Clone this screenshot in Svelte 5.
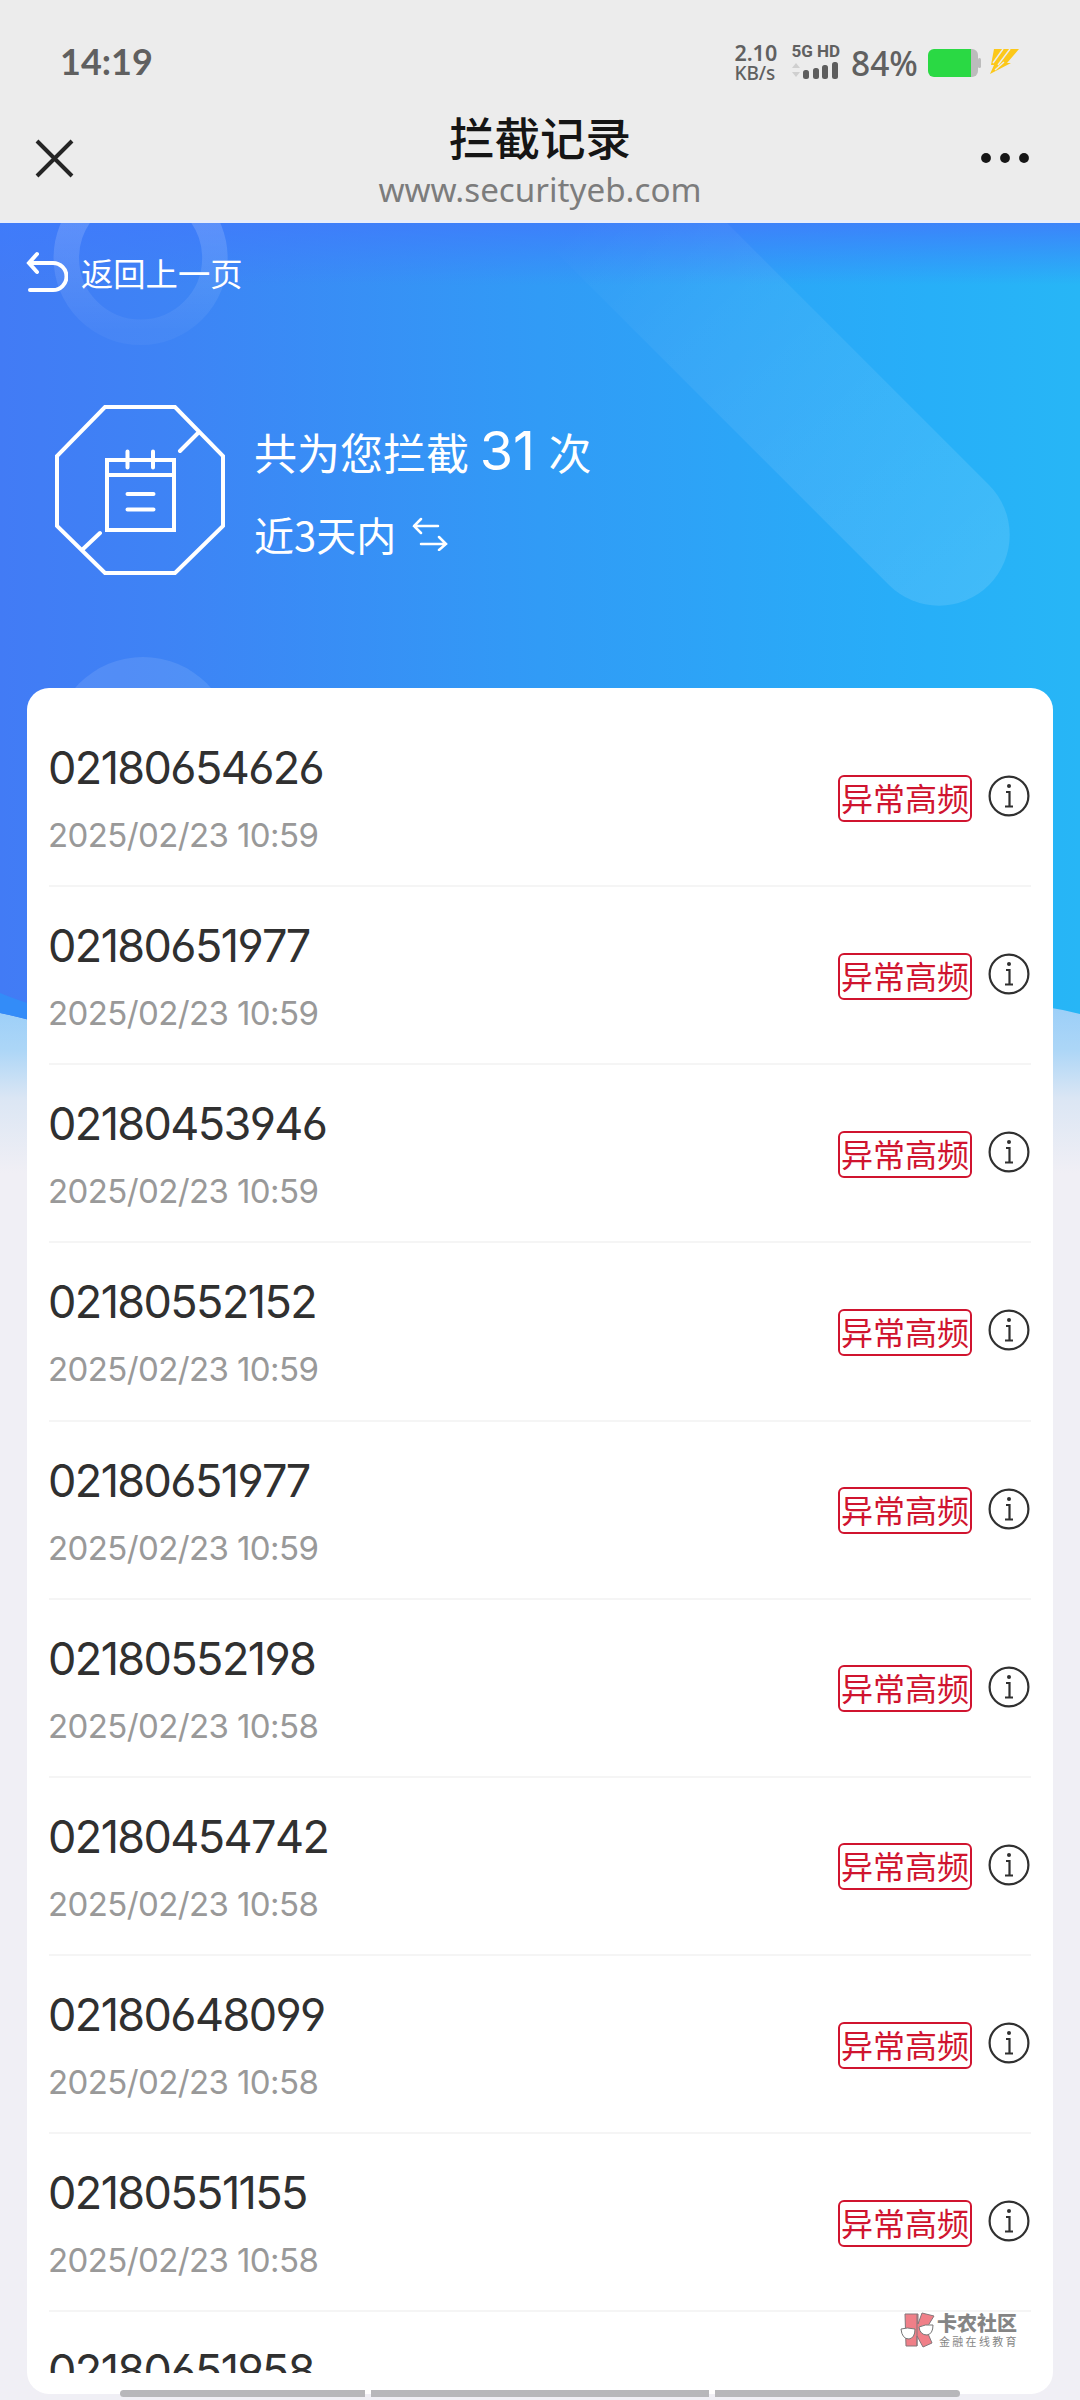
<script>
  const records = [
    { phone: "02180654626", time: "2025/02/23 10:59" },
    { phone: "02180651977", time: "2025/02/23 10:59" },
    { phone: "02180453946", time: "2025/02/23 10:59" },
    { phone: "02180552152", time: "2025/02/23 10:59" },
    { phone: "02180651977", time: "2025/02/23 10:59" },
    { phone: "02180552198", time: "2025/02/23 10:58" },
    { phone: "02180454742", time: "2025/02/23 10:58" },
    { phone: "02180648099", time: "2025/02/23 10:58" },
    { phone: "02180551155", time: "2025/02/23 10:58" },
    { phone: "02180651958", time: "2025/02/23 10:58" },
  ];
  const total = 31;
</script>

<div class="screen">
  <header>
    <div class="status">
      <span class="clock">14:19</span>
      <div class="indicators">
        <div class="speed"><span>2.10</span><span class="unit">KB/s</span></div>
        <div class="network">
          <span>5G HD</span>
          <svg width="47" height="18" viewBox="0 0 47 18">
            <path d="M1 7l4-5 4 5zM1 11l4 5 4-5z" fill="#cfcfcf" />
            <g fill="#5e5e5e">
              <rect x="12" y="9" width="6" height="9" rx="2.5" />
              <rect x="22" y="7" width="6" height="11" rx="2.5" />
              <rect x="31" y="4" width="6" height="14" rx="2.5" />
              <rect x="41" y="1" width="6" height="17" rx="2.5" />
            </g>
          </svg>
        </div>
        <span class="percent">84%</span>
        <svg class="battery" width="54" height="28" viewBox="0 0 54 28">
          <path d="M42 0h2a6 6 0 0 1 6 6v16a6 6 0 0 1-6 6h-2z" fill="#bcbcbc" />
          <rect x="50" y="9" width="3" height="10" rx="1.5" fill="#bcbcbc" />
          <path d="M6 0h37v28H6a6 6 0 0 1-6-6V6a6 6 0 0 1 6-6z" fill="#2ad944" />
        </svg>
        <svg class="bolt" width="30" height="25" viewBox="0 0 30 25">
          <path d="M4 0h25L17 14h4L0 25l4-9H1z" fill="#fcc81a" />
          <path d="M13 0L3 14M20 0L8 16M14 13L5 21" stroke="#ececec" stroke-width="1.5" />
        </svg>
      </div>
    </div>
    <div class="nav">
      <svg class="close" width="39" height="39" viewBox="0 0 39 39">
        <path d="M2 2l35 35M37 2L2 37" stroke="#252525" stroke-width="4" />
      </svg>
      <div class="heading">
        <h1>拦截记录</h1>
        <p>www.securityeb.com</p>
      </div>
      <svg class="more" width="50" height="12" viewBox="0 0 50 12" fill="#161616">
        <circle cx="6" cy="6" r="4.9" />
        <circle cx="25" cy="6" r="4.9" />
        <circle cx="44" cy="6" r="4.9" />
      </svg>
    </div>
  </header>

  <main>
    <svg class="backdrop" width="1080" height="980" viewBox="0 0 1080 980">
      <defs>
        <linearGradient id="sky">
          <stop offset="0" stop-color="#427bf5" />
          <stop offset="0.15" stop-color="#3e83f5" />
          <stop offset="0.5" stop-color="#319bf6" />
          <stop offset="0.86" stop-color="#27aff8" />
          <stop offset="1" stop-color="#27b6f6" />
        </linearGradient>
        <linearGradient id="shade" x2="0" y2="1">
          <stop offset="0" stop-color="#3f7bfb" stop-opacity="0.85" />
          <stop offset="1" stop-color="#3f7bfb" stop-opacity="0" />
        </linearGradient>
        <linearGradient id="haze" gradientUnits="userSpaceOnUse" x1="0" y1="785" x2="0" y2="950">
          <stop offset="0" stop-color="#9ccff8" />
          <stop offset="0.25" stop-color="#acd6f7" />
          <stop offset="0.55" stop-color="#dbe6f4" />
          <stop offset="1" stop-color="#f0eff5" />
        </linearGradient>
        <linearGradient id="ring" x2="0" y2="1">
          <stop offset="0.3" stop-color="#fff" stop-opacity="0.15" />
          <stop offset="1" stop-color="#fff" stop-opacity="0.04" />
        </linearGradient>
        <linearGradient id="beam" gradientUnits="userSpaceOnUse" x1="600" y1="-30" x2="989" y2="360">
          <stop offset="0" stop-color="#fff" stop-opacity="0" />
          <stop offset="0.3" stop-color="#fff" stop-opacity="0.05" />
          <stop offset="1" stop-color="#fff" stop-opacity="0.12" />
        </linearGradient>
      </defs>
      <path d="M0 785H1080V980H0z" fill="url(#haze)" />
      <path d="M0 0H1080V791Q1060 786 1040 783Q540 930 40 800Q20 794 0 790z" fill="url(#sky)" />
      <path d="M0 770Q14 776 40 784V800Q20 794 0 790z" fill="#338cf8" />
      <rect width="1080" height="62" fill="url(#shade)" />
      <circle cx="140.6" cy="35" r="74.3" fill="none" stroke="url(#ring)" stroke-width="25.5" />
      <circle cx="143" cy="524" r="90" fill="#fff" fill-opacity="0.1" />
      <path d="M727 0L989 262A70.5 70.5 0 0 1 889 362L527 0z" fill="url(#beam)" />
    </svg>

    <a class="back" href="#top">
      <svg width="42" height="42" viewBox="0 0 42 42">
        <path d="M11 3L3 12l8 9M3 12h24a13.5 13.5 0 0 1 0 27H4" />
      </svg>
      返回上一页
    </a>

    <section class="summary">
      <svg width="172" height="172" viewBox="0 0 172 172">
        <path d="M51 3h70l48 49v70l-48 47H51L3 122V52zM145 28l-19 19M28 146l18-17" />
        <path d="M53 56h67v70H53zM53 71h67M73.5 47.5v16M99 47.5v16M73.5 90h26M73.5 105.5h26" />
      </svg>
      <div class="figures">
        <p class="count">共为您拦截 <strong>{total}</strong> 次</p>
        <p class="range">
          近3天内
          <svg width="36" height="34" viewBox="0 0 36 34">
            <path d="M9 2L2 9l7 7M2 9h24M27 20l7 7-7 6M34 27H9" />
          </svg>
        </p>
      </div>
    </section>

    <section class="card">
      <ul>
        {#each records as record}
          <li>
            <div class="info">
              <span class="phone">{record.phone}</span>
              <time>{record.time}</time>
            </div>
            <span class="tag">异常高频</span>
            <svg width="42" height="42" viewBox="0 0 42 42">
              <circle cx="21" cy="21" r="19.4" />
              <circle cx="21" cy="11" r="2" class="dot" />
              <path d="M18 17h3.5v14.5M17 31.5h8" />
            </svg>
          </li>
        {/each}
      </ul>
    </section>
  </main>

  <div class="watermark">
    <svg width="36" height="36" viewBox="0 0 36 36">
      <path d="M6 2h13v10l4-11 12 3-8 13 6 14-9 4-6-11v10H7z" fill="#f07f88" stroke="#85777b" />
      <path d="M18 2v32" stroke="#85777b" />
      <path d="M2 17q6-2 14 0 0 9-6 10-7 0-8-10zM20 15q6-3 14-2 0 9-6 10-7 0-8-8z" fill="#fff" stroke="#777" />
    </svg>
    <div>
      <b>卡农社区</b>
      <small>金融在线教育</small>
    </div>
  </div>

  <div class="gesture"><i></i><i class="wide"></i><i></i></div>
</div>

<style>
  :global(body) {
    background: #f0eff5;
  }
  .screen {
    position: relative;
    width: 1080px;
    height: 2400px;
    overflow: hidden;
    display: flex;
    flex-direction: column;
    background: #f0eff5;
    font-family: Inter, "Noto Sans CJK SC", sans-serif;
    color: #303030;
  }
  h1,
  p,
  ul {
    margin: 0;
    padding: 0;
    font-weight: 400;
  }
  svg {
    display: block;
    flex: none;
  }
  header {
    height: 223px;
    box-sizing: border-box;
    flex: none;
    background: #ececec;
    border-bottom: 3px solid #e8edfa;
  }
  .status {
    height: 106px;
    padding: 19px 60px 0 60px;
    box-sizing: border-box;
    display: flex;
    justify-content: space-between;
    align-items: center;
    color: #606060;
  }
  .clock {
    margin-top: -3px;
    font: 700 36px Lato, sans-serif;
  }
  .indicators {
    display: flex;
    align-items: center;
  }
  .speed {
    width: 44px;
    margin-right: 13px;
    display: flex;
    flex-direction: column;
    font: 600 21.5px/21px "Noto Sans", sans-serif;
    white-space: nowrap;
  }
  .unit {
    font-size: 19px;
    font-weight: 500;
  }
  .network {
    display: flex;
    flex-direction: column;
    gap: 2px;
    margin: -3px 11px 0 0;
    font: 700 17px/16px Roboto, sans-serif;
    white-space: nowrap;
  }
  .percent {
    width: 77px;
    font: 500 33.5px "Noto Sans", sans-serif;
    margin-top: 1px;
  }
  .bolt {
    margin: -3px 0 0 8px;
  }
  .nav {
    display: grid;
    grid-template-columns: 60px 1fr 60px;
    padding: 0 50px 0 35px;
  }
  .close {
    margin-top: 33px;
  }
  .more {
    margin-top: 46px;
    justify-self: end;
  }
  .heading {
    margin: -2px -15px 0 0;
    text-align: center;
  }
  h1 {
    font: 500 45.5px/64px "Noto Sans CJK SC", sans-serif;
    color: #151515;
  }
  .heading p {
    font: 400 33.2px/44px "Noto Sans", sans-serif;
    color: #7c7c7c;
  }
  main {
    position: relative;
    flex: none;
  }
  .backdrop {
    position: absolute;
    top: 0;
    left: 0;
  }
  .back,
  .summary,
  .card {
    position: relative;
  }
  .back {
    display: flex;
    align-items: center;
    gap: 13px;
    height: 42px;
    padding: 28px 0 0 26px;
    color: #fff;
    text-decoration: none;
    font: 400 32.3px/42px "Noto Sans CJK SC", sans-serif;
  }
  .back path,
  .summary path {
    fill: none;
    stroke: #fff;
    stroke-width: 4;
    stroke-linecap: round;
  }
  .summary {
    display: flex;
    gap: 28px;
    height: 172px;
    padding: 111px 54px 112px;
    color: #fff;
  }
  .figures {
    display: flex;
    flex-direction: column;
  }
  .count {
    font: 400 43px/80px "Noto Sans CJK SC", sans-serif;
    margin-top: 7px;
  }
  .count strong {
    margin: 0 4px 0 1px;
    font: 400 54px/80px Inter, sans-serif;
  }
  .range {
    display: flex;
    align-items: center;
    gap: 16px;
    margin-top: 3px;
    font: 400 40px/80px "Noto Sans CJK SC", sans-serif;
  }
  .range path {
    stroke-width: 2.5;
  }
  .card {
    box-sizing: border-box;
    height: 1706px;
    margin: 0 27px;
    padding: 21px 22px;
    border-radius: 22px;
    background: #fff;
  }
  ul {
    height: 1664px;
    overflow: hidden;
    list-style: none;
  }
  li {
    box-sizing: border-box;
    height: 178.15px;
    display: flex;
    align-items: center;
    border-bottom: 2px solid #f5f5f5;
  }
  .info {
    flex: 1;
    display: flex;
    flex-direction: column;
    margin: 8px 0 0 -1px;
  }
  .phone {
    font-size: 45px;
    line-height: 64px;
    letter-spacing: -1.6px;
    font-kerning: none;
    font-feature-settings: "cv03", "cv04";
  }
  time {
    margin-top: 4px;
    font-size: 33px;
    line-height: 62px;
    letter-spacing: -0.6px;
    color: #999;
  }
  .tag {
    box-sizing: border-box;
    width: 134px;
    height: 47px;
    margin: 2px 16px 0 0;
    border: 2px solid #d0142f;
    border-radius: 6px;
    text-align: center;
    font: 400 32px/40px "Noto Sans CJK SC", sans-serif;
    color: #d0142f;
  }
  li svg {
    margin: -2px 1px 0 0;
    fill: none;
    stroke: #303030;
    stroke-width: 2.2;
  }
  .dot {
    fill: #303030;
    stroke: none;
  }
  .watermark {
    position: absolute;
    left: 899px;
    top: 2312px;
    display: flex;
    gap: 2px;
    color: #858585;
  }
  .watermark div {
    display: flex;
    flex-direction: column;
  }
  .watermark b {
    font: 900 20px/22px "Noto Sans CJK SC", sans-serif;
  }
  .watermark small {
    font: 400 11px/14px "Noto Sans CJK SC", sans-serif;
    letter-spacing: 2.3px;
    margin-left: 2px;
  }
  .gesture {
    position: absolute;
    left: 120px;
    top: 2390px;
    width: 840px;
    height: 7px;
    display: flex;
    gap: 6px;
    border-radius: 4px;
    overflow: hidden;
  }
  .gesture i {
    width: 245px;
    background: #b7b7ba;
  }
  .gesture .wide {
    flex: 1;
  }
</style>
